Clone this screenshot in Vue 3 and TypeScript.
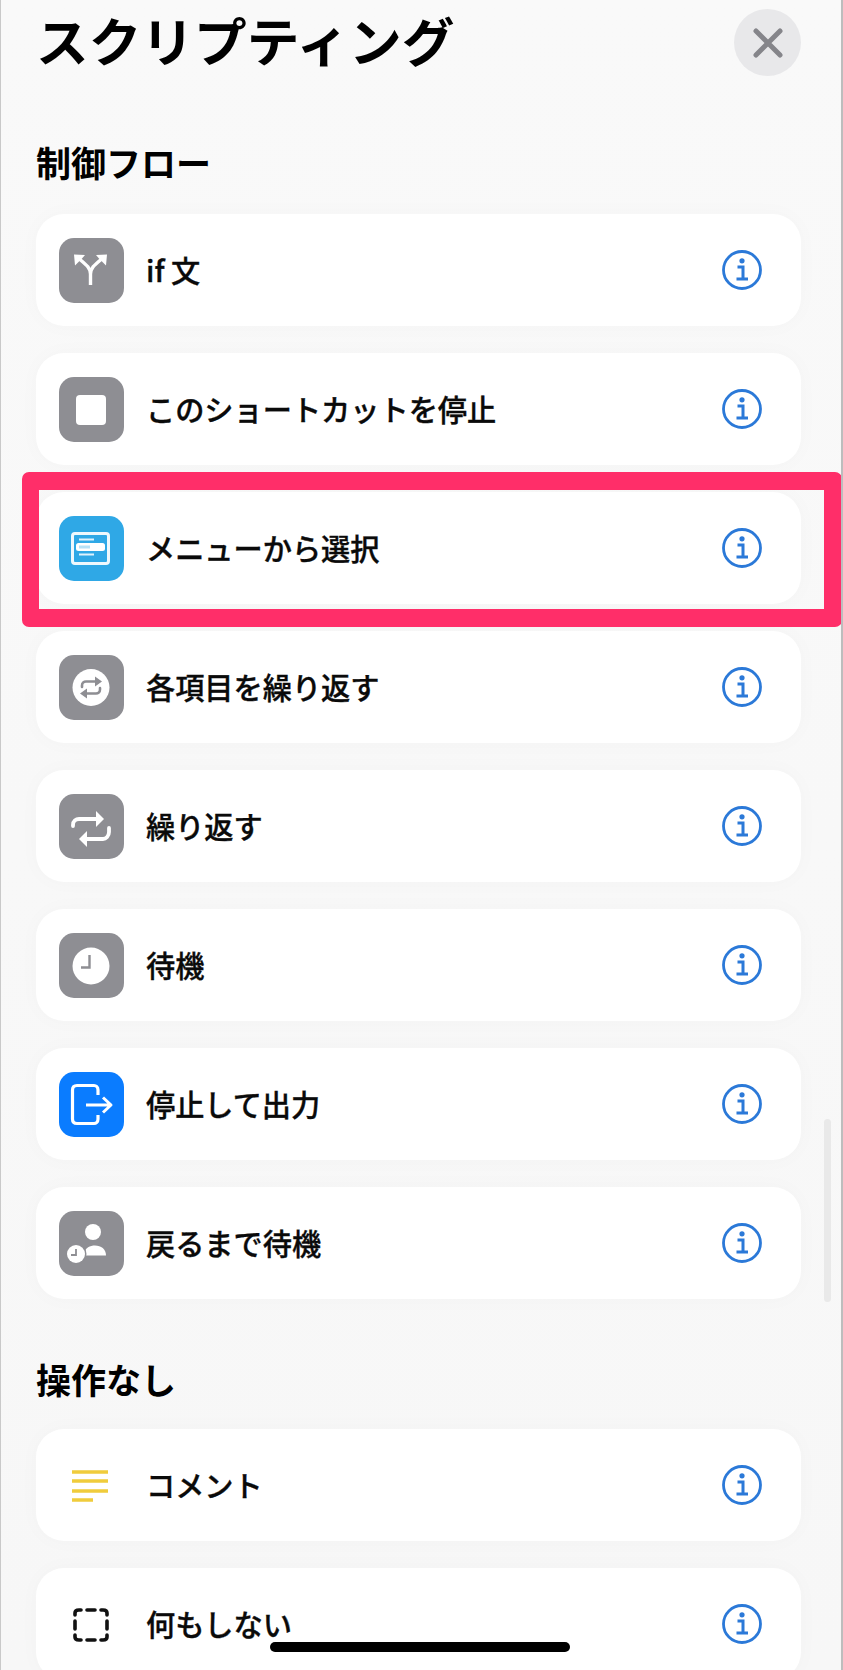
<script setup lang="ts">
interface Row {
  label: string
  icon: string
  tile?: string
}

const flowRows: Row[] = [
  { label: 'if 文', icon: 'branch', tile: 'grey' },
  { label: 'このショートカットを停止', icon: 'stop', tile: 'grey' },
  { label: 'メニューから選択', icon: 'menu', tile: 'sky' },
  { label: '各項目を繰り返す', icon: 'each', tile: 'grey' },
  { label: '繰り返す', icon: 'repeat', tile: 'grey' },
  { label: '待機', icon: 'clock', tile: 'grey' },
  { label: '停止して出力', icon: 'output', tile: 'blue' },
  { label: '戻るまで待機', icon: 'person', tile: 'grey' },
]

const idleRows: Row[] = [
  { label: 'コメント', icon: 'comment' },
  { label: '何もしない', icon: 'nothing' },
]

const sections = [
  { title: '制御フロー', rows: flowRows },
  { title: '操作なし', rows: idleRows },
]
</script>

<template>
  <div class="sheet">
    <header class="head">
      <h1 class="title">スクリプティング</h1>
      <button class="close" aria-label="閉じる">
        <svg width="30" height="30" viewBox="0 0 30 30">
          <path d="M3 3 27 27M27 3 3 27" stroke="#85858a" stroke-width="5" stroke-linecap="round" fill="none" />
        </svg>
      </button>
    </header>

    <section v-for="section in sections" :key="section.title" class="section">
      <h2 class="section-title">{{ section.title }}</h2>
      <div class="cards">
        <div v-for="row in section.rows" :key="row.label" class="card">
          <div class="tile" :class="row.tile">
            <svg width="64" height="65" viewBox="0 0 64 65" fill="none">
              <g v-if="row.icon === 'branch'" stroke="#fff" stroke-width="3.4">
                <path d="M31.5 47V36C31.5 29 26 26 18 19M31.5 36C31.5 29 37 26 45 19" />
                <path d="M15 16.5 26 17 23 20.5 19 24.5 16 27.5Z M48 16.5 37 17 40 20.5 44 24.5 47 27.5Z" fill="#fff" stroke="none" />
              </g>
              <rect v-else-if="row.icon === 'stop'" x="17" y="18" width="30" height="30" rx="4" fill="#fff" />
              <g v-else-if="row.icon === 'menu'">
                <rect x="13.5" y="17.5" width="36" height="30" rx="2.5" stroke="#fff" stroke-width="3" opacity=".92" />
                <path d="M20 23.5H35M20 38.5H35" stroke="#fff" stroke-width="2.2" opacity=".85" />
                <rect x="17" y="27" width="29" height="8" rx="2.5" fill="#fff" />
                <rect x="20" y="29.5" width="11" height="3" fill="#2fa8e6" opacity=".35" />
              </g>
              <g v-else-if="row.icon === 'each'">
                <circle cx="32" cy="32.5" r="18.5" fill="#fff" />
                <g stroke="#8e8e93" stroke-width="2.6" stroke-linecap="round">
                  <path d="M23 32V30.5C23 28 25 26.5 27 26.5H38" />
                  <path d="M41 33V34.5C41 37 39 38.5 37 38.5H26" />
                </g>
                <path d="M36 21.5 43 26.5 36 31.5ZM28 33.5 21 38.5 28 43.5Z" fill="#8e8e93" />
              </g>
              <g v-else-if="row.icon === 'repeat'">
                <g stroke="#fff" stroke-width="3.8" stroke-linecap="round">
                  <path d="M14 32V31C14 27 17 25 20 25H38" />
                  <path d="M50 34V38C50 42 47 45 44 45H27" />
                </g>
                <path d="M37 17 45 25 37 33ZM28 37 20 45 28 53Z" fill="#fff" />
              </g>
              <g v-else-if="row.icon === 'clock'">
                <circle cx="32" cy="33" r="18.5" fill="#fff" />
                <path d="M30.5 22V34.5H22" stroke="#8e8e93" stroke-width="2.4" />
              </g>
              <g v-else-if="row.icon === 'output'" stroke="#fff">
                <path d="M39 23V18C39 15 37 13.5 35 13.5H18C15 13.5 13.5 15 13.5 18V47C13.5 50 15 51.5 18 51.5H35C37 51.5 39 50 39 47V43" stroke-width="3.2" />
                <path d="M27 33H52M44 25.5 52 33 44 40.5" stroke-width="3" stroke-linejoin="round" />
              </g>
              <g v-else-if="row.icon === 'person'">
                <circle cx="34" cy="21" r="8" fill="#fff" />
                <path d="M26 44.5V41C26 37 31 34.5 36 34.5C42 34.5 47 38 47 44.5Z" fill="#fff" />
                <circle cx="17" cy="43" r="10.5" fill="#8e8e93" />
                <circle cx="17" cy="43" r="9" fill="#fff" />
                <path d="M17 38V44H12" stroke="#8e8e93" stroke-width="1.8" />
              </g>
              <path v-else-if="row.icon === 'comment'" d="M13 19H49M13 28H49M13 38H49M13 47H34" stroke="#f0cc3c" stroke-width="3.4" />
              <g v-else-if="row.icon === 'nothing'" stroke="#111" stroke-width="3.6" stroke-linecap="round">
                <path d="M16 23V21C16 19 17 18 20 18H22M28 18H36M42 18H44C47 18 48 19 48 21V23" />
                <path d="M16 29V37M48 29V37" />
                <path d="M16 43V45C16 47 17 48 20 48H22M28 48H36M42 48H44C47 48 48 47 48 45V43" />
              </g>
            </svg>
          </div>
          <span class="label">{{ row.label }}</span>
          <svg class="info" width="40" height="40" viewBox="0 0 40 40" fill="none">
            <circle cx="20" cy="20" r="18.5" stroke="#2b79d8" stroke-width="2.8" />
            <circle cx="20" cy="10.8" r="2.6" fill="#2b79d8" />
            <path d="M15.5 17H21V29M14.5 29H26" stroke="#2b79d8" stroke-width="3" />
          </svg>
        </div>
      </div>
    </section>

    <div class="highlight"></div>
    <div class="scrollbar"></div>
    <div class="home-bar"></div>
  </div>
</template>

<style scoped>
.sheet {
  position: relative;
  box-sizing: border-box;
  width: 843px;
  height: 1670px;
  overflow: hidden;
  padding: 0 40px 0 35px;
  background: linear-gradient(#f9f9f9, #f7f7f7);
  border-left: 1px solid #c9c9c9;
  border-right: 2px solid #bdbdbd;
  font-family: "Noto Sans CJK JP", "Noto Sans", sans-serif;
  color: #000;
}
.head {
  display: flex;
  align-items: flex-start;
  justify-content: space-between;
  padding-top: 9px;
  height: 67px;
}
.title {
  margin: 0;
  font-size: 52.7px;
  line-height: 61px;
  font-weight: 700;
}
.close {
  display: flex;
  align-items: center;
  justify-content: center;
  width: 67px;
  height: 67px;
  padding: 0;
  border: 0;
  border-radius: 50%;
  background: #e8e8ea;
}
.section-title {
  margin: 0 0 30px;
  font-size: 35px;
  line-height: 40px;
  font-weight: 700;
}
.section { margin-top: 60px; }
.section:first-of-type { margin-top: 66px; }
.section:first-of-type .section-title { margin-bottom: 32px; }
.cards {
  display: flex;
  flex-direction: column;
  gap: 27px;
}
.card {
  display: flex;
  align-items: center;
  height: 112px;
  padding: 0 39px 0 23px;
  border-radius: 28px;
  background: #fff;
  box-shadow: 0 0 22px rgba(0, 0, 0, 0.022);
}
.tile {
  display: flex;
  flex: none;
  width: 65px;
  height: 65px;
  border-radius: 15px;
}
.tile.grey { background: #8e8e93; }
.tile.sky { background: #2fa8e6; }
.tile.blue { background: #0a7cff; }
.label {
  flex: 1;
  margin-left: 22px;
  padding-bottom: 3px;
  font-size: 29.2px;
  line-height: 40px;
  font-weight: 500;
  -webkit-text-stroke: 0.35px #0a0a0a;
  color: #0a0a0a;
}
.info { flex: none; }
.highlight {
  position: absolute;
  left: 21px;
  top: 472px;
  width: 820px;
  height: 155px;
  box-sizing: border-box;
  border: solid #ff2e69;
  border-width: 18px 18px 18px 17px;
  border-radius: 7px;
}
.scrollbar {
  position: absolute;
  left: 823px;
  top: 1119px;
  width: 7px;
  height: 183px;
  border-radius: 4px;
  background: #e9e9e9;
}
.home-bar {
  position: absolute;
  left: 269px;
  top: 1642px;
  width: 300px;
  height: 10px;
  border-radius: 5px;
  background: #000;
}
</style>
